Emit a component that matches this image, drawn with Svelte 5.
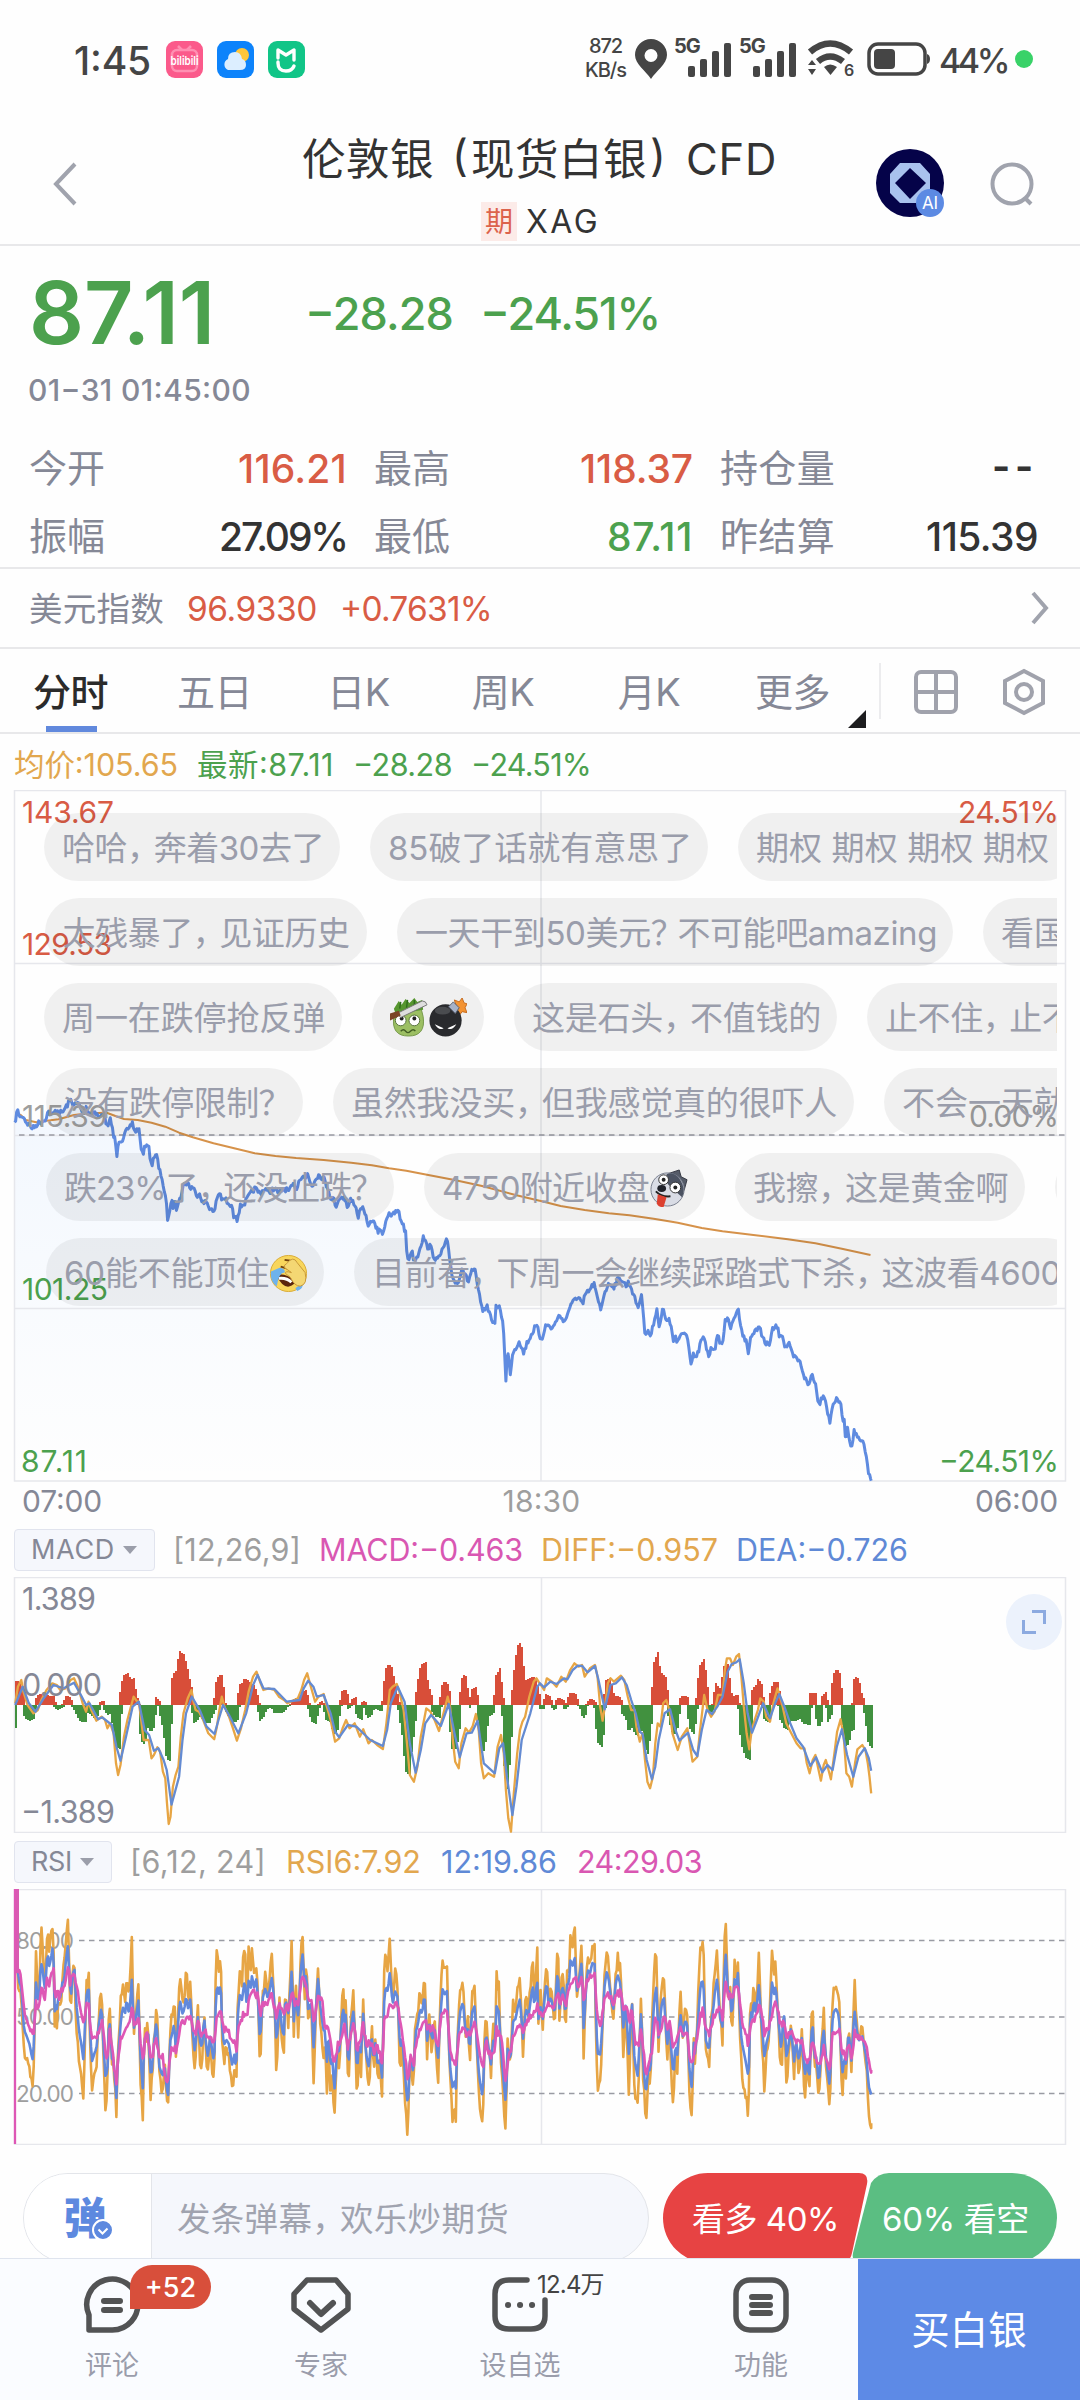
<script lang="ts">
  // All series are stored in chart units: 2.904 per px on x, 3 per px on y.
  // The second list of each pair continues after the 18:30 mark.
  const UX = 2.904;
  const UY = 3;
  const HALF = 1568;

  function parse(a: string, b: string): number[][] {
    const read = (s: string, off: number) =>
      s.trim().split(/\s+/).map((p) => {
        const [x, y] = p.split(",").map(Number);
        return [x + off, y];
      });
    return [...read(a, 0), ...read(b, HALF)];
  }

  const price = parse(
    `42,195 50,150 60,175 66,165 75,185 95,205 110,190 130,180 140,155 150,165 165,150 180,160 195,135 205,120 215,135 228,130 240,160 250,140 262,165 270,150 290,175 300,155 312,205 322,175 330,230 335,240 339,293 346,240 355,240 362,215 375,210 384,188 392,215 403,205 408,250 415,290 422,255 430,250 440,320 446,290 456,288 462,330 470,350 478,400 483,430 488,489 497,420 503,440 508,405 512,445 525,410 530,380 545,365 552,385 562,380 570,410 578,395 590,430 600,425 610,445 622,460 628,420 638,395 646,425 655,415 665,440 672,435 680,475 684,455 688,480 697,440 710,430 725,405 740,385 755,400 770,385 780,400 795,385 810,400 825,385 840,395 850,375 862,385 870,355 880,345 888,360 893,340 900,365 908,380 915,355 925,345 940,355 948,375 955,390 963,425 970,410 972,445 985,415 1000,410 1010,445 1018,420 1030,430 1040,470 1050,440 1060,465 1072,500 1080,475 1090,500 1098,515 1103,500 1110,530 1118,490 1130,455 1138,470 1150,455 1158,455 1162,475 1170,490 1178,520 1180,560 1185,603 1195,570 1202,600 1212,590 1220,560 1230,530 1240,560 1250,560 1260,590 1272,600 1285,570 1298,540 1305,590 1312,640 1320,665 1328,670 1335,650 1342,620 1350,645 1360,665 1370,630 1380,635 1385,670 1395,720 1402,762 1412,735 1420,755 1430,780 1436,800 1440,740 1450,745 1460,780 1465,860 1469,962 1474,870 1478,900 1482,948 1488,880 1500,860 1508,840 1520,880 1530,850 1540,830 1552,805 1560,800 1567,830`,
    `6,835 15,800 22,795 35,805 45,790 52,768 65,775 73,785 85,745 95,730 103,712 115,715 125,738 130,705 145,690 157,670 165,710 177,750 185,705 195,680 205,670 215,680 225,660 235,655 245,668 250,680 258,665 266,685 275,715 285,742 294,705 300,750 305,822 315,815 322,830 330,790 339,745 347,800 357,745 368,790 375,770 388,845 393,825 398,855 410,820 428,820 432,860 440,912 445,880 453,900 460,875 470,835 476,835 485,870 490,888 500,860 508,865 516,830 530,858 538,775 548,785 555,805 567,765 575,745 583,790 590,830 598,840 606,882 613,820 620,825 625,805 630,820 637,795 645,825 655,855 668,850 675,810 688,798 695,825 703,820 713,865 722,850 735,890 745,895 757,910 768,950 780,978 790,940 800,970 805,1010 812,1030 823,1000 830,1025 838,1070 842,1090 850,1030 862,1020 872,1025 878,1070 885,1090 888,1145 893,1100 900,1140 906,1165 912,1110 920,1130 930,1145 938,1145 945,1180 950,1200 955,1245 962,1262`,
  );

  const average = parse(
    `44,160 60,165 75,180 105,187 130,183 170,178 215,165 260,160 310,158 335,168 360,177 400,180 440,188 480,200 520,218 560,232 620,250 680,265 740,280 800,288 860,294 940,300 1020,308 1080,316 1130,325 1180,332 1240,344 1320,360 1400,378 1500,406 1567,422`,
    `0,422 60,438 130,450 200,460 260,466 330,476 400,488 470,504 530,514 620,525 720,538 800,550 880,567 960,585`,
  );

  const diff = parse(
    `44,580 52,530 62,510 68,545 80,585 97,610 110,600 120,570 135,540 152,520 165,525 175,540 190,535 205,510 215,505 228,535 240,580 250,605 257,575 265,600 280,632 295,620 305,630 312,655 320,640 330,670 337,760 343,795 350,765 360,680 370,630 380,590 388,560 396,572 403,575 410,630 417,690 432,690 440,745 447,735 457,712 465,725 473,785 480,805 485,880 490,942 495,920 502,830 510,795 518,770 525,680 533,610 545,565 556,540 562,575 568,600 578,605 590,630 605,670 622,688 630,650 637,600 644,560 652,590 665,620 675,650 688,692 700,655 712,600 722,545 735,500 745,485 755,515 765,540 780,535 797,540 810,560 825,570 835,580 850,572 865,565 875,540 883,510 892,490 900,520 915,575 925,560 940,552 948,585 960,630 973,695 985,685 995,655 1005,630 1015,655 1030,640 1045,680 1055,658 1070,700 1080,690 1095,705 1112,717 1122,640 1132,540 1140,530 1152,522 1160,545 1172,600 1182,700 1190,795 1202,815 1212,770 1222,680 1238,595 1250,605 1262,630 1275,663 1288,610 1300,560 1307,590 1315,690 1322,755 1332,775 1340,700 1352,655 1362,668 1372,650 1382,612 1390,660 1397,760 1405,805 1418,790 1435,800 1445,710 1455,675 1463,730 1469,840 1476,925 1484,965 1492,850 1502,730 1510,660 1517,635 1525,620 1537,560 1550,515 1558,505 1567,520`,
    `0,520 12,540 20,505 35,515 48,530 62,500 75,515 88,480 100,460 112,470 122,465 130,500 145,475 160,465 167,500 175,590 182,632 190,580 197,520 205,505 215,515 235,497 245,510 255,560 265,600 275,600 280,650 290,695 298,670 305,750 312,815 320,835 328,800 335,700 342,640 350,650 358,580 367,570 377,605 385,670 400,720 412,680 428,655 435,700 443,755 457,740 465,660 477,555 487,600 497,620 507,605 517,555 530,555 537,480 543,445 552,445 560,465 570,440 578,432 585,500 592,590 600,670 608,718 615,660 625,625 633,600 640,565 650,575 657,620 668,635 678,580 690,535 697,560 705,590 715,640 730,670 745,700 757,715 768,715 775,760 783,790 792,750 800,735 808,775 816,812 824,765 830,750 838,780 845,808 855,730 863,665 873,628 882,680 890,790 898,800 906,830 915,760 922,718 936,705 945,720 952,760 957,800 962,850`,
  );

  const dea = parse(
    `44,585 66,530 84,580 103,605 125,568 155,525 185,535 215,518 235,555 250,585 260,580 285,628 297,622 325,645 338,710 350,752 366,680 385,590 403,575 420,660 433,675 447,722 460,715 475,750 484,780 498,884 520,800 530,690 540,610 557,560 580,600 600,650 623,672 636,625 648,585 665,615 692,670 715,610 735,525 748,495 765,535 797,537 833,575 870,570 882,535 895,512 910,530 920,560 940,555 960,610 973,665 985,682 1010,645 1035,650 1060,675 1075,690 1112,708 1124,660 1135,580 1155,530 1175,575 1190,700 1207,788 1222,720 1235,640 1252,615 1280,648 1303,582 1320,670 1335,742 1355,670 1370,668 1387,632 1405,760 1437,790 1450,715 1461,700 1472,800 1488,915 1500,830 1515,690 1540,610 1560,530 1567,522`,
    `0,520 12,532 30,515 48,522 70,505 80,508 95,480 110,467 123,468 138,487 160,468 170,510 188,598 205,525 220,520 238,502 252,525 265,570 278,610 290,665 298,672 310,750 325,808 335,770 345,690 362,610 378,598 392,655 405,692 430,668 445,720 457,738 470,660 484,600 500,612 515,590 530,560 545,485 557,462 570,457 580,448 592,520 603,610 616,668 630,630 648,580 668,625 685,575 695,552 710,590 725,635 745,685 765,712 785,768 802,742 820,787 835,765 850,780 862,710 877,658 892,735 910,800 925,740 943,715 955,745 962,782`,
  );

  // MACD histogram, heights above / below the zero line
  const bars = parse(
    `44,0 46,72 56,70 66,30 69,0 72,-30 82,-47 95,-42 102,-15 104,10 115,32 125,35 140,28 155,28 160,0 163,-15 180,-8 186,5 197,28 208,8 213,-5 222,-20 235,-47 246,-52 252,-20 258,-8 265,-25 278,-40 288,-10 292,5 297,12 304,0 310,-35 316,-8 322,-20 330,-55 337,-110 345,-135 349,-60 351,10 354,55 362,85 368,98 376,75 385,80 392,40 400,8 405,0 408,-40 413,-120 420,-105 430,-40 435,-60 441,-80 448,-35 452,0 457,25 464,-5 470,-40 478,-75 485,-140 489,-175 494,-80 498,0 501,60 507,105 514,80 520,130 526,165 534,140 542,105 550,65 558,40 560,-10 567,-58 573,-35 585,-35 598,-50 605,-55 614,-30 622,-25 625,10 629,60 640,92 647,50 652,5 660,-20 670,-40 685,-52 691,-30 695,30 698,65 705,62 712,80 720,70 733,60 742,40 750,15 752,-15 759,-48 766,-25 775,-10 790,-3 800,-25 812,-25 825,-18 832,-5 845,2 860,20 875,25 885,45 893,20 897,0 902,-30 913,-58 922,-20 930,12 940,2 945,-20 952,-50 960,-40 968,-70 975,-90 982,-40 990,5 996,40 1003,47 1009,20 1014,-15 1022,10 1030,25 1037,-25 1047,-45 1053,5 1058,12 1063,-20 1072,-42 1080,-15 1092,-8 1105,-18 1113,5 1118,60 1125,110 1132,122 1140,85 1150,40 1158,5 1162,-30 1172,-90 1180,-180 1186,-215 1193,-130 1203,-60 1207,5 1215,55 1223,110 1233,128 1240,60 1250,30 1256,-15 1265,-30 1275,-40 1281,10 1285,55 1295,70 1303,40 1307,0 1311,-80 1318,-140 1326,-110 1333,-60 1337,5 1342,60 1348,92 1355,50 1365,-10 1371,40 1379,55 1386,20 1390,-20 1396,-90 1403,-155 1410,-80 1418,-35 1430,-25 1437,5 1442,70 1448,112 1456,50 1461,5 1464,-90 1471,-255 1477,-175 1485,-60 1489,20 1495,90 1503,150 1510,188 1518,110 1526,55 1535,75 1548,85 1558,60 1567,20`,
    `0,-8 10,-14 15,15 22,33 30,18 38,-8 45,-16 52,22 60,18 68,15 75,-14 83,18 92,38 103,30 110,3 120,-8 128,-38 136,0 142,12 150,18 160,8 164,-40 170,-100 177,-130 184,-70 189,20 194,70 200,82 207,55 216,10 226,28 236,12 242,-28 252,-35 261,-78 270,-40 280,-95 286,-85 295,-25 303,-100 310,-150 320,-70 327,10 332,90 339,165 346,100 352,70 358,100 365,70 371,10 377,-40 390,-90 398,-65 405,-5 410,20 420,28 429,20 434,-40 443,-88 452,-40 457,15 463,80 472,137 479,100 486,30 492,-20 500,-22 507,20 515,70 522,30 530,60 536,110 542,125 549,70 556,15 563,20 572,33 580,-15 587,-115 597,-145 606,-165 612,-70 617,5 621,55 630,55 637,80 645,40 651,-30 658,-52 667,-30 672,35 680,65 687,70 693,40 698,-40 706,-50 716,-75 725,-45 740,-48 755,-35 768,-55 783,-60 788,35 800,35 804,-30 810,-70 817,-40 822,20 827,42 833,10 840,-58 846,-15 850,50 856,90 863,110 871,80 877,-20 884,-80 892,-130 900,-80 908,-75 911,20 917,85 924,70 930,40 940,10 945,-20 952,-70 958,-120 964,-125`,
  );

  const rsi6 = parse(
    `50,300 57,380 62,375 66,470 70,550 78,560 86,585 92,640 96,660 100,500 104,258 110,340 113,400 117,230 121,182 126,270 131,330 135,250 138,150 143,230 148,200 155,140 157,515 162,430 166,490 170,370 177,415 180,320 186,300 190,230 197,145 201,300 206,440 211,300 217,285 221,470 225,515 230,590 236,620 243,705 247,480 252,330 258,310 262,520 267,660 272,620 280,580 285,470 289,405 295,352 300,560 306,708 312,650 315,435 320,435 325,600 330,570 338,735 342,560 347,470 352,370 358,320 363,390 368,300 375,400 383,215 388,500 395,420 402,335 407,600 415,760 419,470 424,520 430,455 438,695 445,550 455,388 462,610 472,685 478,560 483,660 488,735 494,470 500,440 506,375 511,550 516,440 522,295 530,400 535,380 541,292 547,400 553,325 558,480 566,615 574,398 580,560 587,580 593,390 598,560 604,618 610,500 617,600 622,640 627,260 632,250 636,310 641,240 645,500 650,580 657,540 665,565 675,670 680,600 686,660 690,400 697,275 703,330 711,203 717,400 722,250 728,330 731,245 738,330 745,270 750,420 755,610 763,370 771,300 778,380 790,255 797,400 803,617 812,385 818,520 824,580 828,360 838,460 847,217 853,530 858,330 863,440 867,498 873,250 880,172 884,405 890,250 895,460 904,400 911,637 918,400 924,270 930,440 938,560 944,500 949,697 954,500 960,690 965,590 971,758 978,560 986,580 991,440 996,320 1001,470 1004,360 1012,670 1018,460 1026,375 1032,520 1037,684 1042,540 1049,610 1055,390 1062,560 1072,680 1079,445 1085,610 1090,500 1097,640 1104,580 1110,690 1114,350 1120,240 1126,290 1132,196 1140,400 1147,310 1154,350 1162,630 1168,510 1175,660 1180,750 1185,797 1190,540 1200,650 1207,440 1213,430 1220,350 1226,400 1233,285 1240,565 1248,430 1255,560 1262,450 1272,632 1278,420 1285,272 1292,310 1298,290 1305,600 1314,750 1320,700 1324,750 1328,500 1337,345 1345,320 1352,500 1358,430 1364,607 1370,370 1379,350 1385,560 1392,710 1402,778 1408,470 1415,480 1426,612 1432,460 1437,530 1442,325 1449,350 1455,590 1462,700 1469,780 1474,490 1482,598 1490,400 1497,410 1503,350 1510,305 1519,545 1527,360 1535,430 1547,245 1552,400 1560,225 1564,500 1567,400`,
    `0,350 8,475 14,330 20,258 25,400 32,350 43,463 48,300 52,203 56,450 64,310 70,350 74,505 79,290 84,330 88,190 95,230 101,178 107,395 113,320 122,213 127,585 132,400 139,260 145,300 152,232 159,240 164,560 168,672 176,640 183,450 188,300 194,235 200,280 207,400 213,440 220,300 226,258 234,310 242,545 249,400 258,673 267,365 274,640 284,722 290,500 294,352 300,640 308,748 315,600 321,660 325,460 332,300 338,245 345,550 352,340 360,312 369,595 375,450 382,620 388,712 394,510 398,640 404,450 409,375 414,520 420,415 427,420 434,650 441,745 447,475 450,575 456,480 463,300 468,222 475,240 482,550 491,595 497,440 503,390 508,290 515,220 522,450 530,505 535,230 540,155 546,370 551,330 557,512 565,285 570,350 575,262 580,470 585,590 592,640 598,680 606,737 610,440 614,380 617,440 621,310 627,430 636,258 642,460 652,650 658,560 666,500 670,350 674,228 680,330 685,280 692,470 701,627 708,390 716,642 722,560 729,460 738,645 743,500 752,640 760,480 769,690 776,560 782,690 788,450 792,405 797,600 803,560 810,705 817,520 824,415 830,560 842,717 847,470 852,360 859,337 868,380 873,540 878,688 884,570 890,620 896,450 905,600 909,430 914,350 920,460 926,520 932,490 937,480 943,560 948,600 955,740 962,760`,
  );

  const rsi24 = parse(
    `50,290 55,300 62,330 70,420 80,455 90,480 97,500 104,400 110,420 117,370 124,355 130,385 136,320 143,340 150,310 155,285 160,400 166,360 172,380 178,350 186,365 192,320 198,290 204,340 210,320 217,310 226,370 233,420 243,465 250,410 257,388 263,470 268,505 280,495 290,480 296,450 306,540 312,570 318,480 328,560 338,640 344,560 352,500 360,480 368,460 376,470 384,415 390,470 402,440 410,530 415,570 424,490 432,510 440,575 452,495 463,570 472,560 480,620 488,645 494,550 503,530 510,545 516,510 524,460 540,450 552,435 560,470 567,495 576,455 585,490 594,475 604,510 613,495 622,525 630,440 641,418 650,480 664,485 673,520 680,510 686,550 692,460 700,445 712,430 718,430 724,390 735,370 748,375 756,440 764,395 775,400 790,375 803,440 812,405 824,440 832,400 840,415 848,370 856,410 866,395 874,340 880,305 888,340 896,395 905,390 912,460 924,365 936,390 945,480 955,475 963,530 971,585 982,520 992,500 1000,460 1010,530 1020,490 1028,460 1037,540 1048,500 1055,460 1065,540 1075,510 1085,545 1095,530 1110,580 1116,450 1125,430 1133,395 1142,410 1155,405 1164,470 1175,540 1185,640 1193,550 1202,580 1208,520 1218,480 1233,440 1242,480 1254,470 1272,520 1284,430 1298,425 1308,560 1324,580 1334,490 1345,460 1358,500 1366,490 1379,455 1390,540 1402,600 1412,520 1425,560 1434,550 1442,480 1455,500 1469,640 1476,550 1483,550 1492,490 1510,455 1520,480 1535,445 1550,425 1560,410 1567,440`,
    `0,440 10,430 20,400 38,415 52,370 58,400 66,380 75,400 88,340 105,330 110,350 122,320 128,410 136,340 148,320 160,318 166,440 176,480 188,380 196,365 213,400 222,365 234,370 243,415 250,400 260,460 267,410 276,510 285,535 294,470 307,610 315,580 325,550 333,460 340,440 346,500 360,435 370,480 378,460 388,540 396,510 408,480 416,495 427,485 434,550 441,580 450,530 460,490 466,440 473,420 482,480 491,495 500,460 515,410 530,440 540,330 548,380 557,385 566,360 576,345 585,440 598,490 606,530 612,460 625,440 637,410 646,435 652,490 666,475 676,420 686,400 700,470 708,440 716,500 728,485 740,520 760,515 770,560 782,580 791,510 810,590 824,530 842,600 850,490 864,480 870,490 878,550 890,560 896,510 905,560 914,490 930,510 945,520 954,570 962,600`,
  );

  function valueAt(pts: number[][], x: number) {
    let i = 1;
    while (i < pts.length - 1 && pts[i][0] < x) i++;
    const [x0, y0] = pts[i - 1];
    const [x1, y1] = pts[i];
    return y0 + ((y1 - y0) * (x - x0)) / (x1 - x0 || 1);
  }

  // top: distance in px between the list's origin and the svg's origin
  function line(pts: number[][], top: number) {
    return "M" + pts.map(([x, y]) => `${(x / UX).toFixed(1)} ${(y / UY + top).toFixed(1)}`).join("L");
  }

  function ticks(pts: number[][], amp: number) {
    let seed = 7;
    const out: number[][] = [];
    const end = pts[pts.length - 1][0];
    for (let x = pts[0][0]; x < end; x += 3.2) {
      seed = (seed * 16807) % 2147483647;
      const n = (seed / 2147483647 - 0.5) * 2 * amp;
      out.push([x, valueAt(pts, x) + n]);
    }
    out.push(pts[pts.length - 1]);
    return out;
  }

  // one stepped outline per colour, so neighbouring bars join without seams
  function histogram(sign: number) {
    let d = "M15 128";
    for (let x = 15; x < 872; x += 2) {
      let top = 0;
      for (const dx of [-0.5, 1, 2.5]) {
        top = Math.max(top, valueAt(bars, (x + dx) * UX) * sign);
      }
      d += `V${128 - Math.round(top / UY) * sign}H${x + 2}`;
    }
    return d + "V128Z";
  }

  const pricePts = ticks(price, 8);
  const priceLine = line(pricePts, 270);
  const priceArea = priceLine + "V691H14.5Z";
  const rsi12 = ticks(rsi6, 0).map(([x, y]) => [x, y * 0.46 + valueAt(rsi24, x) * 0.54]);

  // spread the letters so the text fills the given width
  function fit(node: HTMLElement, width: number) {
    const n = [...(node.textContent ?? "")].length;
    const natural = node.getBoundingClientRect().width;
    node.style.letterSpacing = `${(width - natural) / n}px`;
  }

  const stats = [
    { label: "今开", lw: 76, value: "116.21", vw: 109, tone: "up" },
    { label: "最高", lw: 76, value: "118.37", vw: 113, tone: "up" },
    { label: "持仓量", lw: 115, value: "--", vw: 46, tone: "none" },
    { label: "振幅", lw: 76, value: "27.09%", vw: 128, tone: "dark" },
    { label: "最低", lw: 76, value: "87.11", vw: 86, tone: "down" },
    { label: "昨结算", lw: 115, value: "115.39", vw: 112, tone: "dark" },
  ];

  const tabs = ["分时", "五日", "日K", "周K", "月K", "更多"];

  const rows = [
    { x: 0, pills: [
      { text: "哈哈，奔着30去了", w: 296, t: 262 },
      { text: "85破了话就有意思了", w: 338, t: 304 },
      { text: "期权 期权 期权 期权", w: 340, t: 293 },
    ] },
    { x: 0.5, pills: [
      { text: "太残暴了，见证历史", w: 322.5, t: 287 },
      { text: "一天干到50美元？不可能吧amazing", w: 556, t: 522 },
      { text: "看国", w: 140, t: 66 },
    ] },
    { x: 0, pills: [
      { text: "周一在跌停抢反弹", w: 298, t: 263 },
      { text: "", w: 112, icons: ["leek", "bomb"] },
      { text: "这是石头，不值钱的", w: 323, t: 289 },
      { text: "止不住，止不住", w: 260, t: 222 },
    ] },
    { x: 2, pills: [
      { text: "没有跌停限制？", w: 257, t: 221 },
      { text: "虽然我没买，但我感觉真的很吓人", w: 521, t: 486 },
      { text: "不会一天就", w: 240, t: 165 },
    ] },
    { x: 2, pills: [
      { text: "跌23%了，还没止跌？", w: 348, t: 313 },
      { text: "4750附近收盘", w: 281, t: 207, icons: ["husky"] },
      { text: "我擦，这是黄金啊", w: 290, t: 255 },
      { text: "", w: 100 },
    ] },
    { x: 2, pills: [
      { text: "60能不能顶住", w: 278, t: 205, icons: ["cry"] },
      { text: "目前看，下周一会继续踩踏式下杀，这波看4600", w: 727, t: 689 },
    ] },
  ];

  const priceLabels = [
    { s: "143.67", x: 22, y: 33, w: 92, c: "up" },
    { s: "129.53", x: 22, y: 165, w: 90, c: "up" },
    { s: "115.39", x: 22, y: 337, w: 85, c: "mute" },
    { s: "101.25", x: 22, y: 510, w: 86, c: "down" },
    { s: "87.11", x: 21, y: 682, w: 66, c: "down" },
    { s: "24.51%", x: 958, y: 33, w: 101, c: "up" },
    { s: "0.00%", x: 969, y: 337, w: 90, c: "mute" },
    { s: "−24.51%", x: 939, y: 682, w: 120, c: "down" },
  ];
</script>

{#snippet emoji(name: string)}
  <svg class="emoji" viewBox="0 0 40 40">
    {#if name === "leek"}
      <path d="M5 19q-3 20 15 20t15-20l-2-8H8z" fill="#9cbf63" stroke="#75984a" />
      <path d="M5 11l5-8 3 4 4-6 4 4 5-5 3 4 5-2 1 10-28 5z" fill="#56962f" />
      <path d="M12 4l-1 7m8-9l-1 8m8-8l0 8" stroke="#2f6d1b" stroke-width="1.5" />
      <circle cx="12" cy="23" r="5.5" fill="#fff" stroke="#54703a" />
      <circle cx="26" cy="23" r="5.5" fill="#fff" stroke="#54703a" />
      <circle cx="13" cy="21" r="2" fill="#222" /><circle cx="26" cy="21" r="2" fill="#222" />
      <path d="M12 34q3-3 5 0t5 0 5 0" fill="none" stroke="#425d24" stroke-width="1.5" />
      <path d="M8 16L34 3q4 0 5 4L12 20z" fill="#dedede" stroke="#777" />
      <path d="M1 16l9-3 2 5-11 5z" fill="#7b4425" />
    {:else if name === "bomb"}
      <path d="M29 8l-2-6 5 2 3-4 2 5 3 1-2 4 2 5-5-1-3 4-2-6z" fill="#f39332" stroke="#c56c20" />
      <circle cx="18" cy="23" r="16.5" fill="#292a2d" />
      <ellipse cx="15" cy="13" rx="8" ry="4" fill="#74767a" opacity=".45" />
      <path d="M21 9l5-5 6 6-4 6z" fill="#a6b2c8" stroke="#59606d" />
      <path d="M7 27l9 4q-5 3-9-4zm22 0l-9 4q5 3 9-4z" fill="#fff" />
    {:else if name === "husky"}
      <path d="M19 5L31 1l2 7 6 3-3 11z" fill="#555b68" stroke="#343842" />
      <circle cx="19" cy="21" r="17" fill="#d9dce5" stroke="#777d8d" />
      <path d="M18 5q8-3 14 6t2 18l-9-8-6-6z" fill="#4b5261" />
      <circle cx="15" cy="11" r="5" fill="#fff" stroke="#333" /><circle cx="15" cy="11" r="2" fill="#222" />
      <circle cx="27" cy="19" r="5.5" fill="#fff" stroke="#333" /><circle cx="27" cy="19" r="2" fill="#222" />
      <ellipse cx="13" cy="20" rx="4.5" ry="3.5" fill="#20222a" />
      <path d="M7 23q6 6 15 5" fill="none" stroke="#222" stroke-width="2" />
      <path d="M9 26l9 3-3 10q-6 0-7-4z" fill="#dc4030" />
    {:else}
      <circle cx="20" cy="20" r="18.5" fill="#f8d65c" stroke="#d9ab35" />
      <path d="M7 21q12-2 20 8-10 12-20-8" fill="#5b260d" />
      <path d="M10 25q8-1 13 4" stroke="#fff" stroke-width="3" fill="none" />
      <path d="M2 18l9-4q6 1 5 5-6 0-8 14Q1 29 2 18m25 17l7-5q2 5-5 8" fill="#6eb2ec" />
      <path d="M12 13l7 2m-3-9l6 1" stroke="#71420d" stroke-width="2" />
      <path d="M18 10q7-9 11-1l8 10q3 12-5 14-6 0-10-9l-5-4q-1-3 6-1l-7-5q-1-3 2-4" fill="#f4d773" stroke="#c69739" />
    {/if}
  </svg>
{/snippet}

{#snippet bars4()}
  <svg class="signal" width="44" height="36" viewBox="0 0 44 36">
    <rect x="0" y="24" width="7" height="11" rx="2" /><rect x="12" y="17" width="7" height="18" rx="2" />
    <rect x="24" y="9" width="7" height="26" rx="2" /><rect x="36" y="1" width="7" height="34" rx="2" />
  </svg>
{/snippet}

{#snippet cjk(text: string)}{#each text.split(/([，？])/) as part}<span class:punct={part === "，" || part === "？"}>{part}</span>{/each}{/snippet}

<div class="screen">
  <div class="status">
    <span class="clock" use:fit={77}>1:45</span>
    <svg class="app" viewBox="0 0 37 37">
      <rect width="37" height="37" rx="9" fill="#fb5a8b" />
      <rect x="6" y="9" width="25" height="21" rx="5" fill="none" stroke="#ff8fb2" stroke-width="2.5" />
      <path d="M12 5l4 4m9-4l-4 4" stroke="#ff8fb2" stroke-width="2.5" />
      <text x="4.500" y="24" font-size="12" font-weight="600" fill="#fff" textLength="28" lengthAdjust="spacingAndGlyphs">bilibili</text>
    </svg>
    <svg class="app" viewBox="0 0 37 37">
      <rect width="37" height="37" rx="9" fill="#0d83fb" />
      <circle cx="25" cy="14" r="7" fill="#ffc63a" />
      <path d="M11 29a6 6 0 0 1 0-11q0-7 7-7 6 0 7 7 4 1 4 6 0 5-6 5z" fill="#dceeff" />
    </svg>
    <svg class="app" viewBox="0 0 37 37">
      <rect width="37" height="37" rx="9" fill="#11c587" />
      <path d="M10 17V9l8 5 8-5v10m-16 2v1q0 8 8 8 6 0 8-5" fill="none" stroke="#fff" stroke-width="3.4" stroke-linecap="round" stroke-linejoin="round" />
    </svg>
    <div class="speed"><span use:fit={33}>872</span><span use:fit={41}>KB/s</span></div>
    <svg class="pin" width="32" height="40" viewBox="0 0 32 40">
      <path fill-rule="evenodd" d="M16 0A16 16 0 0 0 0 16c0 9 11 16 16 24 5-8 16-15 16-24A16 16 0 0 0 16 0m0 10a6.5 6.5 0 1 1 0 13 6.5 6.5 0 0 1 0-13" />
    </svg>
    <div class="net"><b>5G</b>{@render bars4()}</div>
    <div class="net"><b>5G</b>{@render bars4()}</div>
    <svg class="wifi" width="47" height="38" viewBox="0 0 47 38">
      <g fill="none" stroke="#454545" stroke-width="6.500"><path d="M3 12q20-17 41 0" /><path d="M11 21.500q12-10 25 0" /></g>
      <path d="M17 27q6-5 13 0l-6.500 8zM1 25l4-5 4 5zm0 4h8l-4 6z" />
      <text x="37" y="36" font-size="16" font-weight="600">6</text>
    </svg>
    <svg class="battery" width="63" height="34" viewBox="0 0 63 34">
      <rect x="2" y="2" width="56" height="30" rx="9" fill="none" stroke="#454545" stroke-width="3.500" />
      <rect x="7" y="7" width="21" height="20" rx="4" /><path d="M60 12q3 1 3 5t-3 5z" />
    </svg>
    <span class="percent" use:fit={68}>44%</span>
    <i class="live"></i>
  </div>

  <header>
    <svg class="back" width="26" height="46" viewBox="0 0 26 46"><path d="M23 3L4 23l19 20" /></svg>
    <div class="title">
      <h1><span use:fit={132}>伦敦银</span><span class="paren" use:fit={19}>(</span><span use:fit={176}>现货白银</span><span class="paren" use:fit={19}>)</span><span class="cfd" use:fit={91}>CFD</span></h1>
      <div class="sub"><span class="tag">期</span><span class="code" use:fit={74}>XAG</span></div>
    </div>
    <svg class="avatar" width="68" height="68" viewBox="0 0 68 68">
      <circle cx="34" cy="34" r="34" fill="#050349" />
      <path fill-rule="evenodd" d="M24 14h20l10 11v19L44 54H24L14 44V25zm10 5L19 34l15 16 16-16z" fill="#a9c2ee" />
      <circle cx="54" cy="54" r="14" fill="#5c8ae3" />
      <text x="46" y="60" font-size="17" fill="#fff" textLength="16">AI</text>
    </svg>
    <svg class="search" width="46" height="46" viewBox="0 0 46 46"><circle cx="23" cy="22" r="19.500" /><path d="M36 36l6 6" /></svg>
  </header>

  <section class="quote">
    <div class="last">
      <span class="big" use:fit={186}>87.11</span>
      <span class="chg" use:fit={148}>−28.28</span>
      <span class="chg" use:fit={180}>−24.51%</span>
    </div>
    <div class="date"><span use:fit={223}>01−31 01:45:00</span></div>
    <div class="stats">
      {#each stats as s}
        <div class="stat">
          <span class="label" use:fit={s.lw}>{s.label}</span>
          <span class="value {s.tone}" use:fit={s.vw}>{s.value}</span>
        </div>
      {/each}
    </div>
  </section>

  <section class="index">
    <span class="name" use:fit={135}>美元指数</span>
    <span class="up v1" use:fit={130}>96.9330</span>
    <span class="up v2" use:fit={152}>+0.7631%</span>
    <svg width="20" height="34" viewBox="0 0 20 34"><path d="M3 2l13 15L3 32" /></svg>
  </section>

  <nav class="tabs">
    {#each tabs as tab, i}
      <div class="tab" class:active={i === 0}>{tab}</div>
    {/each}
    <svg class="corner" width="18" height="18"><path d="M18 0v18H0z" /></svg>
    <i class="sep"></i>
    <svg class="tool" width="44" height="44" viewBox="0 0 44 44"><rect x="2" y="2" width="40" height="40" rx="5" /><path d="M22 2v40M2 22h40" /></svg>
    <svg class="tool" width="44" height="48" viewBox="0 0 44 48"><path d="M22 3l19 10v22L22 45 3 35V13z" /><circle cx="22" cy="24" r="8" /></svg>
  </nav>

  <div class="legend">
    <span class="gold" use:fit={164}>均价:105.65</span>
    <span class="down" use:fit={137}>最新:87.11</span>
    <span class="down" use:fit={99}>−28.28</span>
    <span class="down" use:fit={120}>−24.51%</span>
  </div>

  <div class="main-chart">
    <svg width="1080" height="692">
      <defs>
        <linearGradient id="shade" x1="0" y1="270" x2="0" y2="691" gradientUnits="userSpaceOnUse">
          <stop offset="0" stop-color="#5aa0ff" stop-opacity=".08" />
          <stop offset="1" stop-color="#5aa0ff" stop-opacity="0" />
        </linearGradient>
      </defs>
      <path d={priceArea} fill="url(#shade)" />
      <g class="grid"><path d="M14.500 .5H1065.500V691H14.500zM541 0V691M15 173.500H1065M15 345.500H1065M15 518.500H1065" /></g>
      <path class="dash" d="M19 345H1065" />
      <path d={line(average, 270)} class="s-avg" />
      <path d={priceLine} class="s-price" />
      {#each priceLabels as l}
        <text class={l.c} x={l.x} y={l.y} textLength={l.w}>{l.s}</text>
      {/each}
    </svg>
    <div class="danmu">
      {#each rows as row}
        <div class="drow" style="padding-left: {row.x}px">
          {#each row.pills as p}
            <div class="pill" style="width: {p.w}px">
              {#if p.text}<span use:fit={p.t ?? p.w - 36}>{@render cjk(p.text)}</span>{/if}
              {#each p.icons ?? [] as icon}{@render emoji(icon)}{/each}
            </div>
          {/each}
        </div>
      {/each}
    </div>
  </div>

  <div class="times">
    <span use:fit={80}>07:00</span><span class="mid" use:fit={78}>18:30</span><span use:fit={83}>06:00</span>
  </div>

  <div class="ind macd-head">
    <button class="wide"><span use:fit={84}>MACD</span><i></i></button>
    <span class="mute" use:fit={128}>[12,26,9]</span>
    <span class="pink" use:fit={204}>MACD:−0.463</span>
    <span class="gold" use:fit={177}>DIFF:−0.957</span>
    <span class="blue" use:fit={172}>DEA:−0.726</span>
  </div>

  <div class="sub-chart">
    <svg width="1080" height="256">
      <g class="grid"><path d="M14.500 .5H1065.500V255.500H14.500zM541.500 0V255" /></g>
      <path d={histogram(1)} fill="#d84e39" />
      <path d={histogram(-1)} fill="#41913f" />
      <path d={line(diff, -67)} class="s-gold" />
      <path d={line(dea, -67)} class="s-blue" />
      <text x="22" y="32.500" textLength="74">1.389</text>
      <text x="22" y="119" textLength="80">0.000</text>
      <text x="21" y="246" textLength="94">−1.389</text>
    </svg>
    <button class="expand" aria-label="放大">
      <svg width="24" height="24" viewBox="0 0 24 24"><path d="M10 1.500h12.500V14M1.500 10v12.500H14" /></svg>
    </button>
  </div>

  <div class="ind rsi-head">
    <button><span use:fit={41}>RSI</span><i></i></button>
    <span class="mute" use:fit={136}>[6,12, 24]</span>
    <span class="gold" use:fit={135}>RSI6:7.92</span>
    <span class="blue" use:fit={116}>12:19.86</span>
    <span class="pink" use:fit={125}>24:29.03</span>
  </div>

  <div class="rsi-chart">
    <svg width="1080" height="256">
      <g class="grid"><path d="M14.500 .5H1065.500V255.500H14.500zM541.500 0V255" /></g>
      <path class="dash" d="M79 51.500H1065M79 128H1065M79 204.500H1065" />
      <text class="small" x="16" y="60" textLength="58">80.00</text>
      <text class="small" x="16" y="136" textLength="58">50.00</text>
      <text class="small" x="16" y="213" textLength="58">20.00</text>
      <path d={line(ticks(rsi6, 22), -19)} class="s-gold rsi" />
      <path d={line(rsi12, -19)} class="s-blue rsi" />
      <path d={line(ticks(rsi24, 12), -19)} class="s-pink rsi" />
      <path d="M15 0h4v84h-4z" fill="#d95bb2" /><path d="M15 0V255" class="s-pink" />
    </svg>
  </div>

  <div class="compose">
    <div class="field">
      <div class="mode">
        <span>弹</span>
        <svg width="22" height="22" viewBox="0 0 22 22"><circle cx="11" cy="11" r="10" /><path d="M6.500 10.500l4 4 5-5" /></svg>
      </div>
      <span class="hint" use:fit={332}>{@render cjk("发条弹幕，欢乐炒期货")}</span>
    </div>
    <div class="vote">
      <svg width="394" height="90" viewBox="0 0 394 90">
        <path d="M45 0H196Q206 0 204 11L189 80Q187 90 177 90H45A45 45 0 0 1 45 0z" fill="#e74343" />
        <path d="M226 0H349A45 45 0 0 1 349 90H200Q188 90 190 80L208 10Q215 0 226 0z" fill="#5bbe82" />
      </svg>
      <span class="bull" use:fit={147}>看多 40%</span>
      <span class="bear" use:fit={147}>60% 看空</span>
    </div>
  </div>

  <footer>
    <div class="item">
      <svg width="58" height="58" viewBox="0 0 58 58"><path d="M6 54V39A25.500 25.500 0 1 1 29 54z" /><path d="M21 25h16M21 34h16" class="fat" /></svg>
      <span>评论</span>
      <em class="badge">+52</em>
    </div>
    <div class="item">
      <svg width="60" height="58" viewBox="0 0 60 58"><path d="M16 4h29l12 14v15L30 54 3 33V18z" /><path d="M19 27l11 11 12-11" class="fat" /></svg>
      <span>专家</span>
    </div>
    <div class="item">
      <svg width="58" height="58" viewBox="0 0 58 58"><path d="M36 4H18Q4 4 4 18v22q0 13 14 13h22q14 0 14-13V24" stroke-linecap="round" /><path d="M17 29h.1M29 29h.1M41 29h.1" class="dots" /></svg>
      <span>设自选</span>
      <em class="count">12.4万</em>
    </div>
    <div class="item last-item">
      <svg width="58" height="58" viewBox="0 0 58 58"><rect x="4" y="4" width="50" height="50" rx="14" /><path d="M20 21h18M20 29h18M20 37h18" class="fat" /></svg>
      <span>功能</span>
    </div>
    <button class="buy">买白银</button>
  </footer>
</div>

<style>
  :global(body) {
    background: #fff;
  }

  .screen {
    width: 1080px;
    height: 2400px;
    overflow: hidden;
    display: flex;
    flex-direction: column;
    font-family: Inter, "Noto Sans CJK SC", sans-serif;
    font-feature-settings: "case";
    font-size: 30px;
    line-height: 1;
    color: #333;
    background: #fefefe;
  }

  span {
    display: inline-block;
    white-space: pre;
  }

  .punct { margin-right: -6px; }

  svg {
    display: block;
    flex: none;
  }

  button {
    font: inherit;
    border: none;
    padding: 0;
  }

  .up { color: #d95c45; fill: #d95c45; }
  .down { color: #4ca14e; fill: #4ca14e; }
  .mute { color: #9e9e9e; fill: #9e9e9e; }
  .dark { color: #333; }
  .gold { color: #e2a74e; }
  .pink { color: #d957b2; }
  .blue { color: #5f89d6; }

  /* --- STATUS BAR --- */
  .status {
    height: 118px;
    flex: none;
    box-sizing: border-box;
    display: flex;
    align-items: center;
    padding-left: 74px;
    fill: #454545;
    color: #454545;
  }

  .clock {
    font-size: 39px;
    font-weight: 500;
    margin-right: 15px;
    margin-top: 2px;
  }

  .app {
    width: 37px;
    height: 37px;
    margin-right: 14px;
  }

  .speed {
    margin-left: 266px;
    width: 41px;
    display: flex;
    flex-direction: column;
    align-items: center;
    gap: 4px;
    margin-top: -3px;
    font-size: 20px;
    font-weight: 500;
  }

  .pin { margin-left: 9px; }

  .net {
    display: flex;
    margin-left: 7px;
    width: 58px;
    height: 42px;
  }

  .net b {
    font-size: 20px;
    width: 14px;
    font-weight: 700;
    letter-spacing: -1px;
    white-space: nowrap;
    margin-top: -2px;
  }

  .net .signal { margin-top: 4px; }

  .wifi { margin-left: 10px; }
  .battery { margin-left: 13px; }

  .percent {
    font-size: 34px;
    font-weight: 500;
    margin-left: 9px;
    margin-top: 4px;
  }

  .live {
    width: 18px;
    height: 18px;
    border-radius: 50%;
    background: #39d268;
    margin-left: 8px;
  }

  /* --- HEADER --- */
  header {
    height: 126px;
    flex: none;
    display: flex;
    align-items: center;
    border-bottom: 2px solid #e8e8ea;
    padding-left: 52px;
  }

  header .back,
  .search {
    fill: none;
    stroke: #a0a3ad;
    stroke-width: 4;
  }

  .back { margin-top: 6px; }

  .title {
    width: 798px;
    height: 126px;
  }

  h1 {
    margin: 18px 0 0 224px;
    font-size: 43.500px;
    font-weight: 400;
    line-height: 46px;
    white-space: nowrap;
    display: flex;
  }

  .paren { text-align: center; }
  h1 .paren { margin: -2px 0 0 18px; }
  h1 .paren ~ .paren { margin: -2px 17px 0 3px; }

  .sub {
    display: flex;
    align-items: center;
    margin: 20px 0 0 403px;
    gap: 9px;
  }

  .tag {
    width: 36px;
    height: 39px;
    line-height: 40px;
    text-align: center;
    background: #fcebe8;
    color: #dc634c;
    font-size: 28px;
  }

  .code { font-size: 32px; }

  .avatar { margin-top: 4px; }
  .search { margin: 7px 0 0 45px; }

  /* --- QUOTE --- */
  .quote {
    height: 321px;
    flex: none;
    border-bottom: 2px solid #e8e8ea;
  }

  .last {
    display: flex;
    align-items: center;
    height: 84px;
    padding: 25px 0 0 29px;
    color: #4ca14e;
  }

  .big {
    font-size: 86px;
    font-weight: 600;
    margin-right: 90px;
  }

  .chg {
    font-size: 45px;
    font-weight: 500;
    margin-right: 27px;
  }

  .date {
    padding: 18px 0 0 28px;
    color: #858896;
    font-weight: 500;
    font-size: 30px;
    line-height: 34px;
  }

  .stats {
    display: grid;
    grid-template-columns: 318px 319px 318px;
    column-gap: 27px;
    grid-auto-rows: 68px;
    padding: 27px 0 0 29px;
  }

  .stat {
    display: flex;
    justify-content: space-between;
    align-items: center;
    color: #858896;
  }

  .stat .label { font-size: 38px; }
  .stat .value { font-size: 39px; font-weight: 500; }
  .stat .up { color: #d95c45; }
  .stat .down { color: #4ca14e; }
  .stat .none { color: #333; font-weight: 700; }

  /* --- DOLLAR INDEX --- */
  .index {
    height: 78px;
    flex: none;
    border-bottom: 2px solid #e8e8ea;
    display: flex;
    align-items: center;
    padding: 0 30px 0 29px;
    font-size: 33.500px;
  }

  .name { color: #858896; }
  .index span { margin-top: 4px; }
  .index .up { margin-left: 23px; }

  .index svg {
    margin-left: auto;
    fill: none;
    stroke: #a0a3ad;
    stroke-width: 4;
  }

  /* --- TABS --- */
  .tabs {
    height: 83px;
    flex: none;
    border-bottom: 2px solid #e8e8ea;
    display: flex;
    align-items: center;
    color: #858896;
    font-size: 38px;
  }

  .tab {
    box-sizing: border-box;
    width: 143px;
    height: 83px;
    line-height: 87px;
    text-align: center;
    white-space: nowrap;
    letter-spacing: -0.5px;
  }

  .tab:nth-child(3) { padding-left: 2px; }
  .tab:nth-child(4) { width: 145px; padding-left: 3px; }
  .tab:nth-child(5) { width: 147px; padding-left: 3px; }
  .tab:nth-child(6) { width: 127px; padding-left: 16px; }

  .active {
    color: #2b2b2b;
    font-weight: 500;
    padding-right: 2px;
    background: linear-gradient(#6189dd, #6189dd) 46px 100% / 51px 6px no-repeat;
  }

  .corner {
    align-self: flex-end;
    margin: 0 0 4px 0;
    fill: #1d1d1f;
  }

  .sep {
    width: 2px;
    height: 56px;
    background: #ececee;
    margin-left: 13px;
  }

  .tool {
    fill: none;
    stroke: #a0a2ac;
    stroke-width: 4;
    margin: 2px 0 0 33px;
  }

  .tool + .tool { margin-left: 44px; }

  .legend {
    box-sizing: border-box;
    height: 56px;
    flex: none;
    display: flex;
    align-items: center;
    padding: 6px 0 0 14px;
    gap: 19px;
    font-size: 30.500px;
  }

  /* --- CHARTS --- */
  .main-chart {
    height: 692px;
    flex: none;
    position: relative;
  }

  .grid path {
    fill: none;
    stroke: #e6e7ec;
    stroke-width: 1.500;
  }

  .dash {
    fill: none;
    stroke: #999ba3;
    stroke-width: 1.500;
    stroke-dasharray: 5.500 4.500;
  }

  .s-avg, .s-price, .s-gold, .s-blue, .s-pink {
    fill: none;
    stroke-width: 2.300;
    stroke-linejoin: round;
  }

  .s-avg { stroke: #d6924a; stroke-width: 2; }
  .s-price { stroke: #5f8be0; stroke-width: 3; }
  .s-gold { stroke: #e7a544; }
  .s-blue { stroke: #648bd2; }
  .s-pink { stroke: #de57b5; }
  .rsi { stroke-width: 2.600; }
  .rsi.s-blue { stroke: #6189dc; }

  .main-chart text { font-size: 30px; }

  .danmu {
    position: absolute;
    left: 44px;
    top: 23px;
    width: 1013px;
    overflow: hidden;
    display: flex;
    flex-direction: column;
    gap: 17px;
  }

  .drow {
    display: flex;
    gap: 30px;
    height: 68px;
  }

  .pill {
    flex: none;
    box-sizing: border-box;
    height: 68px;
    border-radius: 34px;
    padding: 2px 0 0 18px;
    background: rgba(0, 0, 0, 0.055);
    color: #9a9dab;
    display: flex;
    align-items: center;
    font-size: 33px;
    white-space: nowrap;
  }

  .pill:has(.emoji:first-child) { padding: 0 0 0 17px; }

  .emoji {
    width: 39px;
    height: 39px;
  }

  .times {
    height: 46px;
    flex: none;
    display: flex;
    justify-content: space-between;
    align-items: flex-start;
    box-sizing: border-box;
    padding: 4px 22px 0;
    color: #858896;
    line-height: 30px;
  }

  .times .mid { color: #9e9e9e; margin-left: 6px; }

  .ind {
    flex: none;
    display: flex;
    align-items: center;
    height: 43px;
    padding-left: 14px;
    padding-bottom: 6px;
    font-size: 30.500px;
  }

  .ind > span { margin: 1px 18px 0 0; }
  .rsi-head { padding-top: 7px; }
  .rsi-head > span { margin-right: 20px; }

  .ind button {
    box-sizing: border-box;
    width: 98px;
    height: 42px;
    border: 1.500px solid #e1e4ee;
    border-radius: 4px;
    background: #f5f7fc;
    color: #858896;
    font-size: 27px;
    display: flex;
    align-items: center;
    padding-left: 16px;
    gap: 8px;
    margin-right: 18px;
  }

  .ind button.wide { width: 141px; }

  .ind i {
    border: 7px solid transparent;
    border-top: 8px solid #9b9eaa;
    border-bottom: 0;
  }

  .sub-chart {
    height: 256px;
    flex: none;
    position: relative;
  }

  .sub-chart text {
    font-size: 30.500px;
    fill: #858896;
  }

  .expand {
    position: absolute;
    left: 1006px;
    top: 17px;
    width: 56px;
    height: 56px;
    border-radius: 50%;
    background: #ecf2fc;
    display: flex;
    align-items: center;
    justify-content: center;
  }

  .expand path {
    fill: none;
    stroke: #8caae0;
    stroke-width: 3;
  }

  .rsi-chart { height: 256px; flex: none; }

  .small {
    font-size: 22.500px;
    fill: #9e9e9e;
  }

  /* --- COMPOSE --- */
  .compose {
    height: 85px;
    flex: none;
    overflow: hidden;
    display: flex;
    padding: 28px 23px 0;
    gap: 14px;
  }

  .field {
    box-sizing: border-box;
    width: 626px;
    height: 90px;
    border: 1.500px solid #e3e5ea;
    border-radius: 45px;
    background: #f5f7fc;
    overflow: hidden;
    display: flex;
    align-items: center;
    flex: none;
  }

  .mode {
    width: 127px;
    height: 90px;
    background: #fff;
    border-right: 1.500px solid #e3e5ea;
    position: relative;
    display: flex;
    align-items: center;
    justify-content: center;
  }

  .mode span {
    font-size: 43px;
    font-weight: 900;
    color: #5d89df;
    margin-left: -5px;
  }

  .mode svg {
    position: absolute;
    left: 68px;
    top: 46px;
    fill: #5d89df;
    stroke: #fff;
    stroke-width: 2;
  }

  .hint {
    margin: 3px 0 0 25px;
    color: #a0a3af;
    font-size: 33.500px;
  }

  .vote {
    position: relative;
    width: 394px;
    height: 90px;
    color: #fff;
    font-size: 33px;
  }

  .bull, .bear {
    position: absolute;
    top: 30px;
    left: 29px;
  }

  .bear { left: 219px; }

  /* --- BOTTOM BAR --- */
  footer {
    height: 142px;
    flex: none;
    display: grid;
    grid-template-columns: 224px 192px 208px 234px 1fr;
    background: #fafcff;
    border-top: 1.500px solid #dfe4ee;
  }

  .item {
    position: relative;
    display: flex;
    flex-direction: column;
    align-items: center;
    padding-top: 17px;
    color: #9a9dab;
    font-size: 27px;
    gap: 18px;
  }

  .item:nth-child(2) { padding-left: 2px; }
  .last-item { padding-left: 40px; }

  .item svg {
    fill: none;
    stroke: #525354;
    stroke-width: 5.500;
    stroke-linejoin: round;
  }

  .item .fat {
    stroke-width: 6;
    stroke-linecap: round;
  }

  .item .dots {
    stroke-width: 6;
    stroke-linecap: round;
  }

  em { font-style: normal; }

  .badge {
    position: absolute;
    left: 130px;
    top: 6px;
    width: 81px;
    height: 44px;
    line-height: 45px;
    border-radius: 22px 22px 22px 0;
    text-align: center;
    background: #d84f3b;
    color: #fff;
    font-size: 27px;
    font-weight: 500;
  }

  .count {
    position: absolute;
    left: 121px;
    top: 14px;
    color: #444;
    font-size: 24px;
    letter-spacing: -0.8px;
    white-space: nowrap;
    background: #fafcff;
  }

  .buy {
    background: #5d8ae6;
    color: #fff;
    font-size: 38.500px;
  }
</style>
